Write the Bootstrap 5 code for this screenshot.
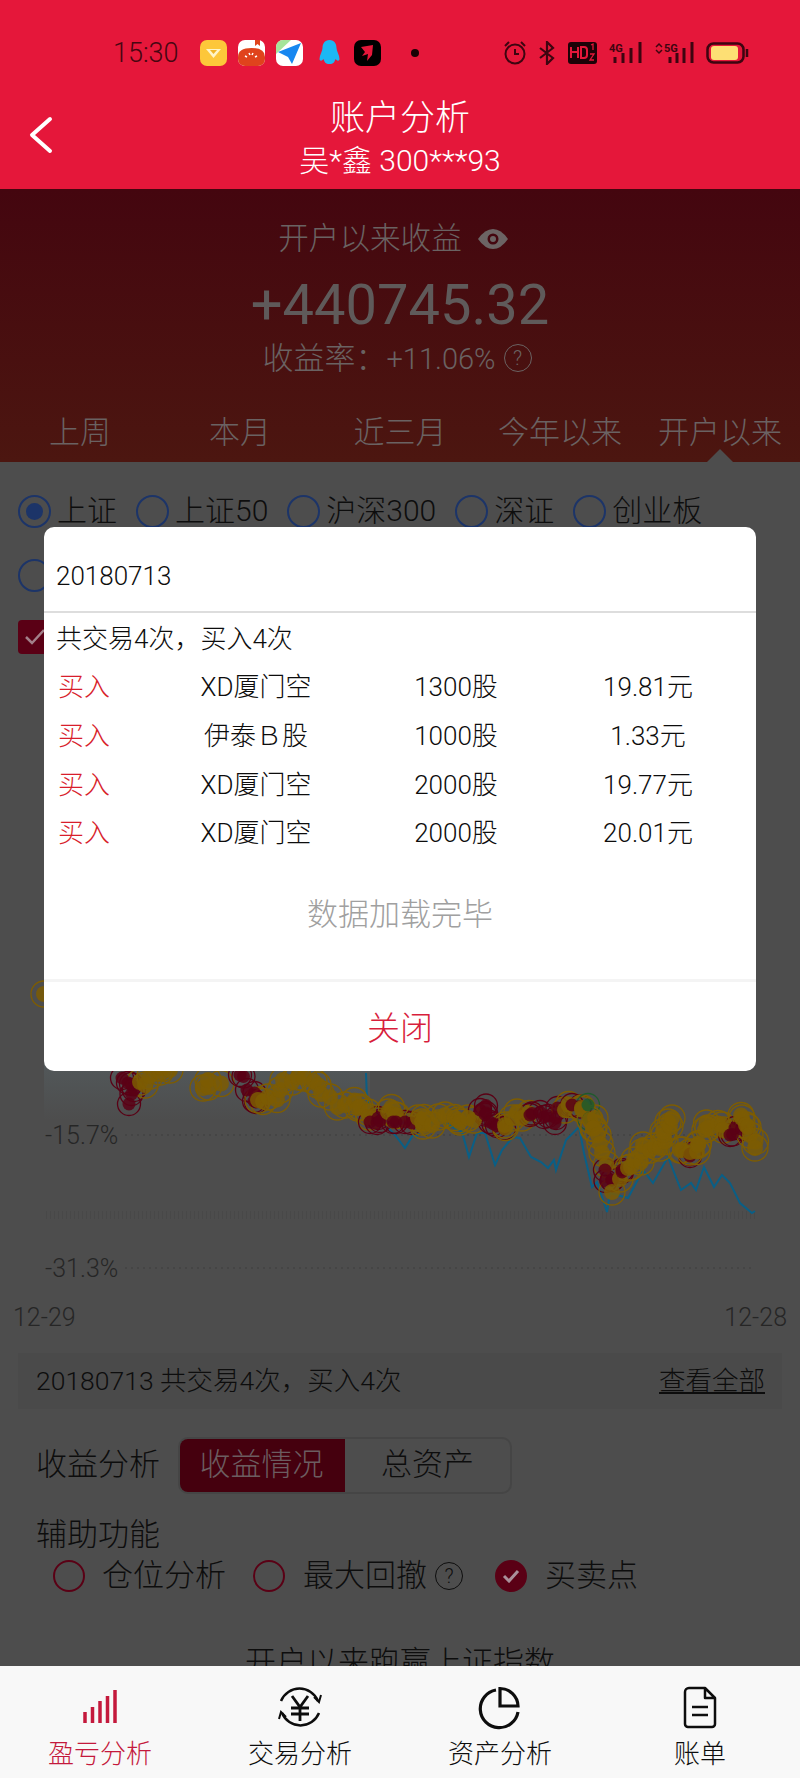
<!DOCTYPE html>
<html lang="zh">
<head>
<meta charset="utf-8">
<title>账户分析</title>
<link rel="stylesheet" href="https://cdn.jsdelivr.net/npm/bootstrap@5.3.0/dist/css/bootstrap.min.css">
<style>
html,body{margin:0;height:1778px;overflow:hidden}
body{font-family:Roboto,"Noto Sans CJK SC",sans-serif;font-weight:300;color:#0d0d0d;background:#4d4d4d;position:relative}
.app-top{height:189px;background:#e5173a;position:relative}
.status-row{height:106px;padding:0 51px 0 113px;color:#470611}
.clock{font-size:27px;font-weight:300;width:87px;line-height:1}
.stat-gap{gap:11px}
.title-main{font-size:35px;line-height:1;color:#fff;text-align:center;margin-top:-5px}
.title-sub{font-size:30px;line-height:1;color:#fff;text-align:center;margin-top:10px}
.back-btn{position:absolute;left:29px;top:116px}
.dim-head{height:273px;background:linear-gradient(#44060f,#4c1610);color:#6a6262;position:relative;text-align:center}
.gain-title{font-size:30.6px;line-height:1;padding:35px 14px 0 0;gap:16px}
.gain-num{font-size:56px;line-height:1;margin-top:22px;font-weight:400;color:#5f5a5a}
.gain-rate{font-size:29px;line-height:1;margin-top:10px;gap:8px;padding-right:6px}
.rate-cjk{font-size:31px}
.span-row{position:absolute;left:0;right:0;top:228px;font-size:31px;line-height:32px}
.span-row>div{width:160px}
.tab-tri{position:absolute;left:707px;bottom:0;width:0;height:0;border:13px solid transparent;border-top:0;border-bottom:13px solid #4d4d4d}
.idx-row{height:32px;font-size:30px;line-height:32px;margin-top:33px;padding-left:18px}
.idx-row.row-two{margin-top:32px}
.ring{width:33px;height:33px;border:2px solid #1c3468;border-radius:50%;flex:none;display:flex;align-items:center;justify-content:center}
.ring i{width:17px;height:17px;background:#1c3468;border-radius:50%}
.opt-text{margin-left:6px;margin-right:19px}
.sq-check{width:34px;height:34px;background:#5a0015;border-radius:4px;margin:29px 0 0 18px;display:flex;align-items:center;justify-content:center}
.chart-wrap{height:681px;margin-top:0;position:relative}
.chart-svg{position:absolute;left:0;top:0}
.ylab{position:absolute;left:45px;font-size:25px;line-height:1;color:#262626}
.xlab{position:absolute;font-size:25px;line-height:1;color:#262626}
.info-box{height:56px;margin:18px 18px 0;padding:0 17px 0 18px;background:#4a4a4a;font-size:26.5px;white-space:nowrap}
.see-all{font-size:26.5px;text-decoration:underline;color:#0d0d0d}
.sect-row{margin-top:28px;padding-left:36px;font-size:31px;height:57px}
.seg-box{margin-left:18px;width:334px;height:57px;border:2px solid #454545;border-radius:10px;overflow:hidden}
.seg-on{width:167px;background:#45000e;color:#6c5d60;margin:-2px 0 -2px -2px;display:flex;align-items:center;justify-content:center}
.seg-off{flex:1;display:flex;align-items:center;justify-content:center}
.aux-title{font-size:31px;line-height:40px;margin-top:21px;padding-left:36px}
.aux-row{padding-left:53px;font-size:31px;height:32px;line-height:32px;margin-top:5px}
.ring-red{width:32px;height:32px;border:2px solid #5a0015;border-radius:50%;flex:none;display:flex;align-items:center;justify-content:center}
.ring-red.is-on{background:#5a0015}
.help-dot{width:28px;height:28px;border:1px solid currentColor;border-radius:50%;display:inline-flex;align-items:center;justify-content:center;font-size:20px;line-height:1}
.win-text{font-size:31px;line-height:38px;text-align:center;margin-top:52px}
.foot-nav{position:absolute;left:0;right:0;top:1666px;height:112px;background:#f8f8f8;z-index:5}
.foot-nav>div{width:200px;text-align:center;font-size:26px;line-height:1;color:#0d0d0d;padding-top:20px}
.foot-nav svg{display:block;margin:0 auto 11px;height:44px}
.foot-nav .is-red{color:#c4193c}
.dlg{position:absolute;left:44px;top:527px;width:712px;height:544px;background:#fff;border-radius:10px;color:#0d0d0d;z-index:4;overflow:hidden}
.dlg-head{height:86px;padding:13px 0 0 12px;font-size:26px;line-height:72px;border-bottom:2px solid #ddd}
.dlg-sum{font-size:26px;line-height:48px;padding-left:12px;padding-top:2px}
.deal{display:grid;grid-template-columns:99px 198px 202px 182px;padding-left:14px;font-size:26px;line-height:49px;height:48.8px;text-align:center}
.deal>div:first-child{text-align:left;color:#d81e2c}
.dlg-done{text-align:center;color:#a0a0a0;font-size:31px;line-height:40px;margin-top:37px}
.dlg-close{border-top:3px solid #f4f4f4;height:93px;margin-top:44px;padding-top:4px;display:flex;align-items:center;justify-content:center;color:#d81e3c;font-size:33px}
</style>
</head>
<body>
<header class="app-top">
  <div class="status-row d-flex align-items-center">
    <div class="clock">15:30</div>
    <div class="d-flex align-items-center stat-gap">
      <svg width="27" height="26" viewBox="0 0 27 26"><rect width="27" height="26" rx="7" fill="#fdc73a"/><path d="M6 9h15l-7.500 9z" fill="#fff5c8"/><path d="M10 10h7l-3.500 4z" fill="#f0b428"/></svg>
      <svg width="27" height="26" viewBox="0 0 27 26"><rect width="27" height="26" rx="7" fill="#fff"/><path d="M0 17q0-9 13.500-9T27 17v2a7 7 0 0 1-7 7H7a7 7 0 0 1-7-7z" fill="#e0431c"/><path d="M17 0h5v6l-2.500-2-2.500 2z" fill="#e0431c"/><path d="M7 16l2 1M11 13l1 2M15 13l-1 2M19 16l-2 1" stroke="#fff" stroke-width="1.500"/></svg>
      <svg width="27" height="26" viewBox="0 0 27 26"><rect width="27" height="26" rx="7" fill="#fff"/><path d="M0 7a7 7 0 0 1 7-7h8l-15 14z" fill="#a5e59a"/><path d="M2 12L25 3 16 24l-4-7z" fill="#1787f0"/></svg>
      <svg width="25" height="26" viewBox="0 0 25 26" style="margin-left:3px;margin-right:1px"><path d="M12.500 0c5 0 7 4 7 8 0 3 3 7 3 11 0 2-2 2-3 1l-1-1c-1 3-2 5-6 5s-5-2-6-5l-1 1c-1 1-3 1-3-1 0-4 3-8 3-11 0-4 2-8 7-8z" fill="#1cb8f4"/></svg>
      <svg width="27" height="26" viewBox="0 0 27 26"><rect width="27" height="26" rx="7" fill="#000"/><path d="M7 7l12-2-1 10-5 6 1-7-6 2 3-4z" fill="#e5173a"/></svg>
      <svg width="8" height="8" viewBox="0 0 8 8" style="margin-left:19px"><circle cx="4" cy="4" r="4" fill="#1a0205"/></svg>
    </div>
    <div class="ms-auto d-flex align-items-center" style="gap:12px">
      <svg width="22" height="24" viewBox="0 0 22 24" fill="none" stroke="#3d0510" stroke-width="2"><circle cx="11" cy="13" r="9.500"/><path d="M11 8v5h4M1 5l4-4M21 5l-4-4"/></svg>
      <svg width="18" height="24" viewBox="0 0 18 24" fill="none" stroke="#3d0510" stroke-width="2.200"><path d="M2 7l13 10-6 6V1l6 6L2 17"/></svg>
      <svg width="29" height="22" viewBox="0 0 29 22"><rect width="29" height="22" rx="3" fill="#1d0207"/><path d="M3 5v11M10 5v11M3 10h7M13 5v11h3a3 3 0 0 0 3-3V8a3 3 0 0 0-3-3z" stroke="#e5173a" stroke-width="2" fill="none"/><path d="M23 3l2-1v6M22 12h4l-4 6h4" stroke="#e5173a" stroke-width="1.300" fill="none"/></svg>
      <svg width="33" height="22" viewBox="0 0 33 22"><text x="0" y="10" font-size="11" font-weight="700" fill="#3d0510" font-family="Roboto">4G</text><path d="M6 15v6M14 11v10M22 6v15M31 0v21" stroke="#3d0510" stroke-width="3"/></svg>
      <svg width="40" height="22" viewBox="0 0 40 22"><path d="M2 5l3-3 3 3M2 8l3 3 3-3" stroke="#3d0510" stroke-width="1.500" fill="none"/><text x="10" y="10" font-size="11" font-weight="700" fill="#3d0510" font-family="Roboto">5G</text><path d="M16 15v6M23 11v10M30 6v15M38 0v21" stroke="#3d0510" stroke-width="3"/></svg>
      <svg width="43" height="22" viewBox="0 0 43 22"><rect x="1.500" y="1.500" width="36" height="19" rx="6" fill="#e5173a" stroke="#3d0510" stroke-width="2.500"/><rect x="5" y="4" width="27" height="14" rx="3" fill="#fddf74"/><path d="M41 7v8" stroke="#3d0510" stroke-width="2.500"/></svg>
    </div>
  </div>
  <div class="title-main">账户分析</div>
  <div class="title-sub">吴*鑫 300***93</div>
  <svg class="back-btn" width="24" height="38" viewBox="0 0 24 38" fill="none" stroke="#fff" stroke-width="4" stroke-linecap="round" stroke-linejoin="round"><path d="M21 3L3 19l18 16"/></svg>
</header>

<main>
  <section class="dim-head">
    <div class="gain-title d-flex justify-content-center align-items-center">
      <span>开户以来收益</span>
      <svg width="30" height="20" viewBox="0 0 30 20"><path d="M0 10Q7 0 15 0t15 10Q23 20 15 20T0 10z" fill="#6c6464"/><circle cx="15" cy="10" r="5.500" fill="#44060f"/><circle cx="15" cy="10" r="3" fill="#6c6464"/></svg>
    </div>
    <div class="gain-num">+440745.32</div>
    <div class="gain-rate d-flex justify-content-center align-items-center"><span><span class="rate-cjk">收益率：</span>+11.06%</span><span class="help-dot">?</span></div>
    <div class="span-row d-flex">
      <div>上周</div><div>本月</div><div>近三月</div><div>今年以来</div><div>开户以来</div>
    </div>
    <div class="tab-tri"></div>
  </section>

  <div class="idx-row d-flex">
    <span class="ring"><i></i></span><span class="opt-text">上证</span>
    <span class="ring"></span><span class="opt-text">上证50</span>
    <span class="ring"></span><span class="opt-text">沪深300</span>
    <span class="ring"></span><span class="opt-text">深证</span>
    <span class="ring"></span><span class="opt-text">创业板</span>
  </div>
  <div class="idx-row row-two d-flex"><span class="ring"></span></div>
  <div class="sq-check"><svg width="22" height="18" viewBox="0 0 22 18" fill="none" stroke="#a3808a" stroke-width="2.500"><path d="M2 9l6 6L20 2"/></svg></div>

  <div class="chart-wrap">
    <svg class="chart-svg" id="chartArt" width="800" height="681" viewBox="0 654 800 681"></svg>
    <div class="ylab" style="top:469px">-15.7%</div>
    <div class="ylab" style="top:602px">-31.3%</div>
    <div class="xlab" style="left:13px;top:651px">12-29</div>
    <div class="xlab" style="right:13px;top:651px">12-28</div>
  </div>

  <div class="info-box d-flex align-items-center justify-content-between">
    <span>20180713 共交易4次，买入4次</span><span class="see-all">查看全部</span>
  </div>
  <div class="sect-row d-flex align-items-center">
    <span>收益分析</span>
    <div class="seg-box d-flex"><div class="seg-on">收益情况</div><div class="seg-off">总资产</div></div>
  </div>
  <div class="aux-title">辅助功能</div>
  <div class="aux-row d-flex align-items-center">
    <span class="ring-red"></span><span style="margin-left:17px;width:151px">仓位分析</span>
    <span class="ring-red"></span><span style="margin-left:18px;margin-right:8px">最大回撤</span><span class="help-dot">?</span>
    <span class="ring-red is-on" style="margin-left:32px"><svg width="18" height="14" viewBox="0 0 18 14" fill="none" stroke="#a9909a" stroke-width="3"><path d="M2 7l5 5L16 2"/></svg></span><span style="margin-left:18px">买卖点</span>
  </div>
  <div class="win-text">开户以来跑赢上证指数</div>
</main>

<div class="dlg">
  <div class="dlg-head">20180713</div>
  <div class="dlg-sum">共交易4次，买入4次</div>
  <div class="deal"><div>买入</div><div>XD厦门空</div><div>1300股</div><div>19.81元</div></div>
  <div class="deal"><div>买入</div><div>伊泰Ｂ股</div><div>1000股</div><div>1.33元</div></div>
  <div class="deal"><div>买入</div><div>XD厦门空</div><div>2000股</div><div>19.77元</div></div>
  <div class="deal"><div>买入</div><div>XD厦门空</div><div>2000股</div><div>20.01元</div></div>
  <div class="dlg-done">数据加载完毕</div>
  <div class="dlg-close">关闭</div>
</div>

<nav class="foot-nav d-flex">
  <div class="is-red"><svg width="36" height="44" viewBox="0 0 36 44"><path d="M3 37V26M10.500 37V21M18 37V15M25.500 37V10M33 37V4" stroke="#c4193c" stroke-width="3.500" fill="none"/></svg>盈亏分析</div>
  <div><svg width="46" height="44" viewBox="0 0 46 44" fill="none" stroke="#0d0d0d" stroke-width="2.500"><path d="M4 15A20 20 0 0 1 41 15M42 27A20 20 0 0 1 5 27"/><path d="M37 11l5 5 2-7M9 31l-5-5-2 7" stroke-width="2"/><path d="M15 10l8 11 8-11M23 21v14M14 22h18M14 28h18" stroke-width="2.800"/></svg>交易分析</div>
  <div><svg width="44" height="44" viewBox="0 0 44 44" fill="none" stroke="#0d0d0d" stroke-width="3.200"><path d="M18 4A19 19 0 1 0 40 26"/><path d="M22 2.500A18 18 0 0 1 40 20H22z"/></svg>资产分析</div>
  <div><svg width="34" height="44" viewBox="0 0 34 44" fill="none" stroke="#0d0d0d" stroke-width="2.500"><path d="M6 2h16l10 10v26a3 3 0 0 1-3 3H5a3 3 0 0 1-3-3V6a4 4 0 0 1 4-4zM22 2v10h10" stroke-linejoin="round"/><path d="M9 21h16M9 29h16"/></svg>账单</div>
</nav>

<script>
(function(){
  var NS='http://www.w3.org/2000/svg',s=document.getElementById('chartArt');
  function el(t,a){var e=document.createElementNS(NS,t);for(var k in a)e.setAttribute(k,a[k]);s.appendChild(e);return e;}
  var grad=document.createElementNS(NS,'linearGradient');grad.id='fadeArea';grad.setAttribute('x1',0);grad.setAttribute('y1',0);grad.setAttribute('x2',0);grad.setAttribute('y2',1);
  [['0','#586468'],['1','#4d4d4d']].forEach(function(c){var st=document.createElementNS(NS,'stop');st.setAttribute('offset',c[0]);st.setAttribute('stop-color',c[1]);grad.appendChild(st);});
  s.appendChild(grad);
  el('rect',{x:44,y:1000,width:326,height:120,fill:'url(#fadeArea)'});
  [1135,1268].forEach(function(y){el('line',{x1:125,x2:752,y1:y,y2:y,stroke:'#434343','stroke-width':1.500,'stroke-dasharray':'2 4'});});
  el('line',{x1:46,x2:755,y1:1215,y2:1215,stroke:'#484848','stroke-width':8,'stroke-dasharray':'1 3'});
  var blue='366,1073 367,1100 388,1128 395,1135 405,1148 413,1135 416,1137 423,1125 440,1120 462,1132 469,1157 477,1133 485,1133 495,1165 502,1150 513,1137 520,1138 531,1157 541,1162 548,1168 554,1160 556,1170 566,1140 579,1127 584,1153 592,1187 597,1182 607,1212 610,1193 628,1198 643,1170 653,1183 668,1157 681,1190 691,1183 696,1190 704,1167 714,1187 722,1175 730,1183 740,1203 752,1213 755,1211';
  el('polyline',{points:blue,fill:'none',stroke:'#0a5f86','stroke-width':2});
  var Y='#7d5c02',R='#5a0015',G='#1f5a2c';
  var raw=[[44,994,Y],[129,1104,R],[134,1090,R],[122,1078,R],[140,1082,Y],[150,1076,Y],[160,1072,Y],[170,1070,Y],[203,1088,Y],[208,1080,Y],[240,1075,R],[247,1090,R],[256,1102,R],[258,1100,Y],[268,1097,Y],[280,1090,Y],[292,1082,Y],[304,1078,Y],[318,1085,Y],[330,1097,Y],[345,1105,Y],[358,1108,Y],[368,1112,Y],[370,1122,R],[378,1118,R],[388,1112,Y],[395,1115,Y],[393,1122,R],[405,1122,R],[418,1118,Y],[422,1122,Y],[432,1125,Y],[445,1115,Y],[458,1120,Y],[468,1118,Y],[480,1110,R],[486,1113,R],[490,1122,R],[497,1126,R],[505,1125,Y],[512,1118,Y],[522,1118,Y],[530,1115,R],[540,1112,R],[548,1116,R],[556,1118,R],[565,1110,Y],[572,1105,R],[582,1108,Y],[588,1105,G],[590,1120,Y],[594,1128,Y],[598,1135,Y],[602,1153,Y],[605,1170,R],[612,1180,R],[612,1192,Y],[622,1172,R],[628,1168,Y],[634,1160,Y],[642,1152,Y],[650,1150,Y],[660,1148,Y],[664,1135,Y],[668,1122,Y],[672,1118,Y],[680,1150,Y],[690,1156,R],[690,1152,Y],[698,1145,Y],[705,1130,Y],[708,1128,Y],[722,1125,Y],[730,1135,R],[735,1128,R],[742,1118,Y],[746,1125,Y],[750,1135,Y],[755,1148,Y]];
  var pts=[];
  raw.forEach(function(p,i){
    pts.push(p);
    var q=raw[i+1];
    if(q&&Math.abs(q[0]-p[0])+Math.abs(q[1]-p[1])<40){
      pts.push([(p[0]+q[0])/2+((i%3)-1)*3,(p[1]+q[1])/2+((i%5)-2)*3,p[2]]);
    }
  });
  pts.forEach(function(p){
    el('circle',{cx:p[0],cy:p[1],r:p[2]===Y?13:11.5,fill:'none',stroke:p[2],'stroke-width':1.300});
  });
  pts.forEach(function(p){
    el('circle',{cx:p[0],cy:p[1],r:p[2]===Y?8:6.500,fill:p[2],'fill-opacity':.85});
  });
})();
</script>
</body>
</html>
